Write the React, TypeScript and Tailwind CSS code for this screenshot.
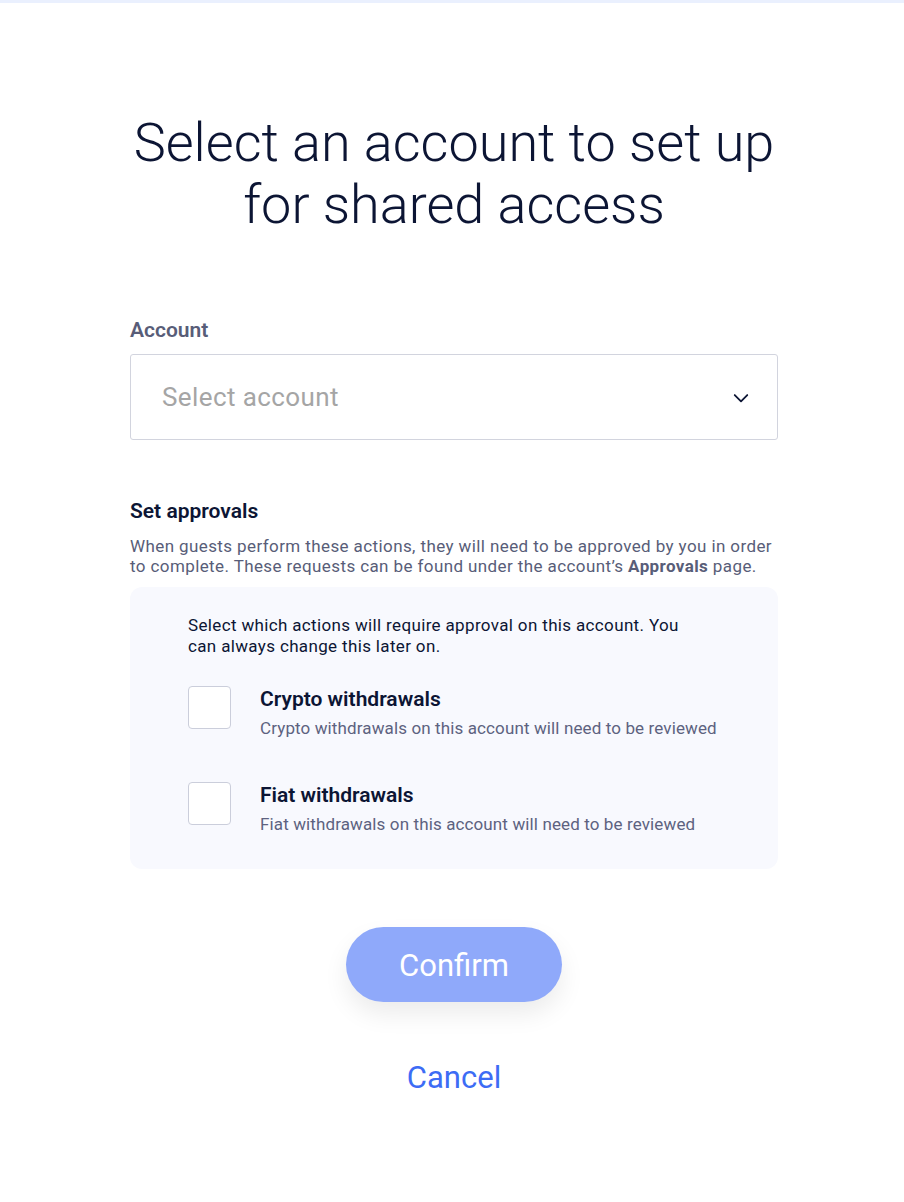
import { useState } from 'react'

const options = [
    { id: 'crypto', title: 'Crypto withdrawals', description: 'Crypto withdrawals on this account will need to be reviewed' },
    { id: 'fiat', title: 'Fiat withdrawals', description: 'Fiat withdrawals on this account will need to be reviewed' },
]

export default function App() {
    const [checked, setChecked] = useState<Record<string, boolean>>({})

    const toggle = (id: string) => {
        setChecked(prev => ({ ...prev, [id]: !prev[id] }))
    }

    return (
        <div className="min-h-[1202px] bg-white font-['Roboto',sans-serif]">
            <div className="h-[3px] bg-[#eaf0fe]"></div>
            <div className="w-[648px] ml-[130px] pb-10">
                <h1 className="mt-[109px] text-center text-[54px] leading-[62px] font-light text-[#0c1534]">
                    Select an account to set up for shared access
                </h1>

                <label className="block mt-[82px] text-[21px] leading-[24px] font-semibold text-[#585d78]">Account</label>
                <button className="mt-[12px] w-full h-[86px] rounded-[3px] border border-[#d2d4de] bg-white flex items-center justify-between pl-[31px] pr-[26px]">
                    <span className="text-[26px] tracking-[0.4px] text-[#a5a5a5]">Select account</span>
                    <svg className="w-[20px] h-[20px] mt-[2px] text-[#0c1534]" fill="none" stroke="currentColor" viewBox="0 0 24 24">
                        <path strokeLinecap="round" strokeLinejoin="round" strokeWidth={2.2} d="M4.5 8.5l7.5 7.5 7.5-7.5" />
                    </svg>
                </button>

                <h2 className="mt-[59px] text-[21px] leading-[24px] font-semibold text-[#0c1534]">Set approvals</h2>
                <p className="mt-[13px] text-[17px] leading-[20px] tracking-[0.4px] text-[#585d78]">
                    When guests perform these actions, they will need to be approved by you in order to complete. These requests can be found under the account’s <span className="font-bold">Approvals</span> page.
                </p>

                <div className="mt-[11px] rounded-[12px] bg-[#f8f9fe] pl-[58px] pr-6 pt-[28px] pb-[35px]">
                    <p className="w-[510px] text-[17px] leading-[21px] tracking-[0.35px] text-[#0c1534]">
                        Select which actions will require approval on this account. You can always change this later on.
                    </p>
                    <div className="mt-[29px] flex flex-col gap-[44px]">
                        {options.map(item => (
                            <div key={item.id} className="flex items-start gap-[29px] cursor-pointer" onClick={() => toggle(item.id)}>
                                <div className={`w-[43px] h-[43px] rounded-[4px] border border-[#cbcedb] ${checked[item.id] ? 'bg-[#3d6cf5]' : 'bg-white'}`}></div>
                                <div className="pt-[1px]">
                                    <p className="text-[21px] leading-[24px] font-semibold text-[#0c1534]">{item.title}</p>
                                    <p className="mt-[7px] text-[17px] leading-[20px] tracking-[0.12px] text-[#5d6280]">{item.description}</p>
                                </div>
                            </div>
                        ))}
                    </div>
                </div>

                <div className="flex flex-col items-center">
                    <button className="mt-[58px] w-[216px] h-[75px] pt-[3px] rounded-full bg-[#8fa9fa] text-white text-[31px] shadow-[0_12px_24px_rgba(0,0,0,0.08)]">
                        Confirm
                    </button>
                    <button className="mt-[58px] text-[31px] leading-[36px] text-[#3d6cf5]">Cancel</button>
                </div>
            </div>
        </div>
    )
}
